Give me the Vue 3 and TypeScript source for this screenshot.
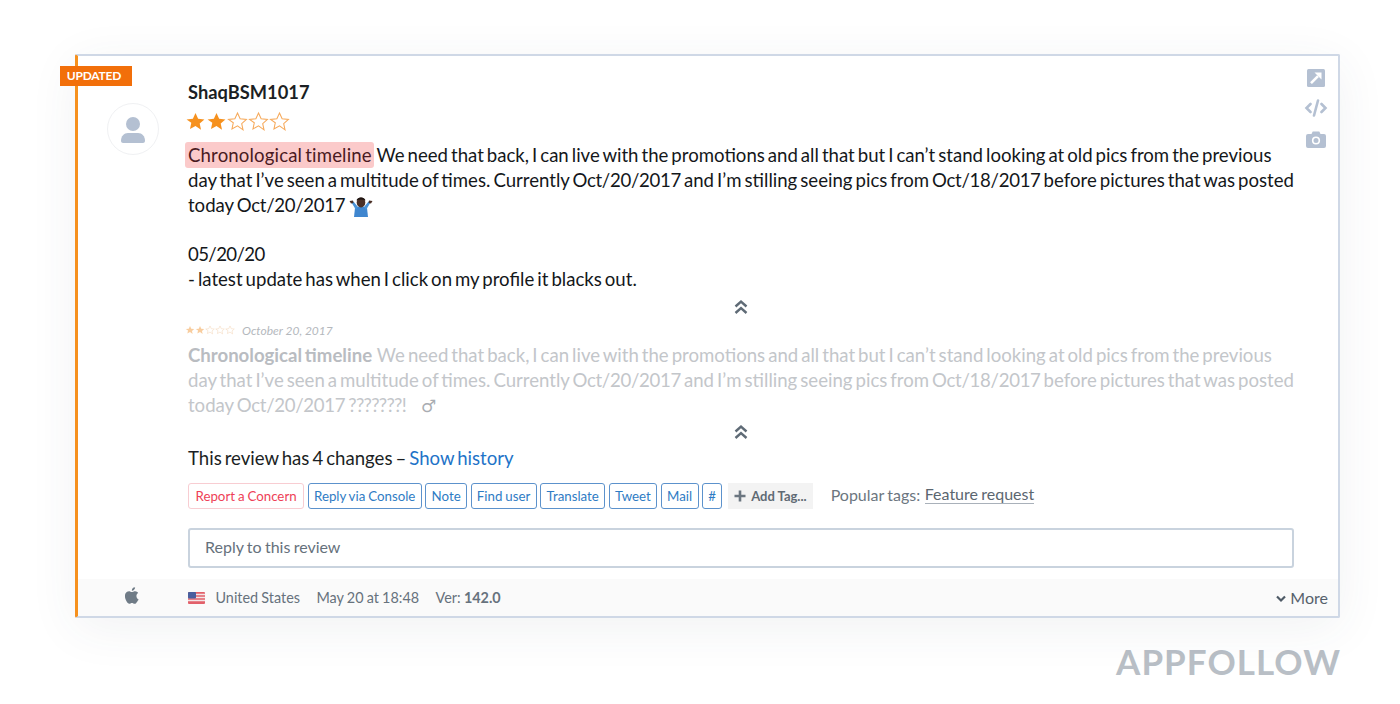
<script setup lang="ts">
const buttons = ["Reply via Console", "Note", "Find user", "Translate", "Tweet", "Mail", "#"];
const stars = [true, true, false, false, false];
const starPath = "M12 2.2l3 6.6 7.2.8-5.4 4.8 1.5 7.1L12 17l-6.3 3.5 1.5-7.1L1.8 9.600l7.2-.8z";
</script>

<template>
  <div class="page">
    <div class="card">
      <div class="badge">UPDATED</div>
      <div class="side-icons">
        <svg width="18" height="18" viewBox="0 0 18 18">
          <rect width="18" height="18" rx="1.500" fill="#b4c0d2" />
          <path d="M4 14.200L11 7.200" stroke="#fff" stroke-width="2.600" fill="none" />
          <path d="M7.500 3.500H14.500V10.500z" fill="#fff" />
        </svg>
        <svg width="24" height="18" viewBox="0 0 24 18">
          <path d="M6.500 5L2.500 9l4 4M17.500 5L21.500 9l-4 4M14 1.500L10 16.500" stroke="#b4c0d2" stroke-width="2.600" fill="none" stroke-linecap="round" />
        </svg>
        <svg class="camera" width="20" height="17" viewBox="0 0 20 17">
          <path d="M2 3h3.500l1.200-2.500h6.600L14.500 3H18a2 2 0 0 1 2 2v10a2 2 0 0 1-2 2H2a2 2 0 0 1-2-2V5a2 2 0 0 1 2-2z" fill="#b4c0d2" />
          <circle cx="10" cy="9.500" r="3.300" fill="none" stroke="#fff" stroke-width="1.600" />
        </svg>
      </div>

      <div class="body">
        <div class="avatar-col">
          <div class="avatar">
            <svg width="26" height="27" viewBox="0 0 26 27">
              <circle cx="13" cy="8" r="7" fill="#b4c0d2" />
              <path d="M1 25c0-5 3-8 7-8h10c4 0 7 3 7 8 0 1-1 2-2 2H3c-1 0-2-1-2-2z" fill="#b4c0d2" />
            </svg>
          </div>
        </div>

        <div class="main">
          <div class="name">ShaqBSM1017</div>
          <div class="stars">
            <svg v-for="(on, i) in stars" :key="i" width="21" height="21" viewBox="0 0 24 24">
              <path :d="starPath" :fill="on ? '#f6911e' : 'none'" stroke="#f6a95a" :stroke-width="on ? 0 : 1.200" />
            </svg>
          </div>

          <p class="text first">
            <span class="hl">Chronological timeline</span>
            <span> We need that back, I can live with the promotions and all that but I can’t stand looking at old pics from the previous</span><br />
            <span>day that I’ve seen a multitude of times. Currently <i class="dt">Oct/20/2017</i> and I’m stilling seeing pics from <i class="dt">Oct/18/2017</i> before pictures that was posted</span><br />
            <span>today <i class="dt">Oct/20/2017</i></span>
            <svg class="shrug" width="24" height="22" viewBox="0 0 24 22">
              <path d="M6 13c2-2 10-2 12 0l1 9H5z" fill="#3f86cf" />
              <path d="M7 15L2.500 7.500 4.500 6.500 9 12zM17 15l4.500-7.500-2-1L15 12z" fill="#4a93d8" />
              <path d="M0.500 6l3.500-.5.500 2.500-2.500.5zM23.500 6l-3.500-.5-.5 2.500 2.500.5z" fill="#4b3027" />
              <ellipse cx="12" cy="7.500" rx="4.300" ry="5" fill="#4b3027" />
              <path d="M7.500 5.500C8 1.500 16 1.500 16.500 5.500 14 4 10 4 7.500 5.500z" fill="#1f1512" />
            </svg>
          </p>
          <p class="text gap-line"><i class="dt short">05/20/20</i><br />- latest update has when I click on my profile it blacks out.</p>

          <div class="chevrons">
            <svg width="14" height="16" viewBox="0 0 14 16">
              <path d="M1.500 7.500L7 2.500l5.500 5M1.500 14L7 9l5.500 5" fill="none" stroke="#5f6b76" stroke-width="2.400" />
            </svg>
          </div>

          <div class="old-meta">
            <div class="mini-stars">
              <svg v-for="(on, i) in stars" :key="i" width="10" height="10" viewBox="0 0 24 24">
                <path :d="starPath" :fill="on ? '#f8cd9f' : 'none'" stroke="#f5dcc2" :stroke-width="on ? 0 : 1.500" />
              </svg>
            </div>
            <span class="old-date">October 20, 2017</span>
          </div>
          <p class="text old">
            <b>Chronological timeline</b>
            <span> We need that back, I can live with the promotions and all that but I can’t stand looking at old pics from the previous</span><br />
            <span>day that I’ve seen a multitude of times. Currently <i class="dt">Oct/20/2017</i> and I’m stilling seeing pics from <i class="dt">Oct/18/2017</i> before pictures that was posted</span><br />
            <span>today <i class="dt">Oct/20/2017</i> <i class="marks">???????!</i></span>
            <span class="male">♂</span>
          </p>

          <div class="chevrons second">
            <svg width="14" height="16" viewBox="0 0 14 16">
              <path d="M1.500 7.500L7 2.500l5.500 5M1.500 14L7 9l5.500 5" fill="none" stroke="#5f6b76" stroke-width="2.400" />
            </svg>
          </div>

          <p class="changes">This review has 4 changes – <a class="link">Show history</a></p>

          <div class="actions">
            <span class="btn red">Report a Concern</span>
            <span v-for="b in buttons" :key="b" class="btn">{{ b }}</span>
            <span class="add-tag">
              <svg width="12" height="12" viewBox="0 0 12 12"><path d="M6 0.500v11M0.500 6h11" stroke="#6b7680" stroke-width="2.600" /></svg>
              Add Tag...
            </span>
            <span class="popular">Popular tags:</span>
            <span class="tag">Feature request</span>
          </div>

          <div class="reply">Reply to this review</div>
        </div>
      </div>

      <div class="footer">
        <div class="os">
          <svg width="15" height="17" viewBox="0 0 170 200">
            <path fill="#6f7b86" d="M150 155c-3 7-6 13-10 19-5 8-10 13-13 16-5 5-11 7-17 7-4 0-9-1-15-4-6-2-11-4-16-4s-11 1-17 4c-6 3-11 4-15 4-6 0-12-2-17-8-4-3-9-9-14-17-6-9-10-19-14-30-4-12-6-24-6-35 0-13 3-24 8-33 4-7 10-13 17-17s14-6 23-6c4 0 10 1 18 4s13 5 15 5c2 0 8-2 17-5 8-3 16-4 22-4 16 1 28 8 36 20-14 9-21 21-21 36 0 12 4 22 13 30 4 4 8 7 13 9-1 3-2 6-4 9zM116 4c0 9-3 18-10 26-8 10-18 16-29 15 0-1 0-2 0-4 0-9 4-18 10-25 3-4 7-7 12-9 5-3 10-4 15-5 1 1 2 2 2 2z" />
          </svg>
        </div>
        <div class="meta">
          <svg class="flag" width="17" height="12" viewBox="0 0 17 12">
            <rect width="17" height="12" rx="1" fill="#e2606a" />
            <path d="M0 2.500h17M0 5.500h17M0 8.500h17" stroke="#f3e6e8" stroke-width="1.300" />
            <rect width="8" height="6.500" rx="1" fill="#4a5f9e" />
          </svg>
          <span class="country">United States</span>
          <span>May 20 at 18:48</span>
          <span>Ver: <b>142.0</b></span>
        </div>
        <div class="more">
          <svg width="10" height="8" viewBox="0 0 10 8"><path d="M1 1.500L5 5.500l4-4" fill="none" stroke="#4e5a66" stroke-width="2.200" /></svg>
          More
        </div>
      </div>
    </div>
    <div class="brand">APPFOLLOW</div>
  </div>
</template>

<style>
html, body {
  margin: 0;
  background: #fff;
}
</style>

<style scoped>
.page {
  width: 1400px;
  height: 704px;
  box-sizing: border-box;
  padding: 54px 60px 0 75px;
  font-family: Lato, "Liberation Sans", sans-serif;
  color: #1b1f24;
  overflow: hidden;
}

.card {
  position: relative;
  height: 564px;
  box-sizing: border-box;
  background: #fff;
  border: 2px solid #cfd8e6;
  border-left: 3px solid #f6911e;
  border-radius: 2px;
  box-shadow: 0 10px 50px rgba(60, 70, 90, 0.07);
  display: flex;
  flex-direction: column;
}

.badge {
  position: absolute;
  left: -18px;
  top: 10px;
  width: 72px;
  height: 20px;
  box-sizing: border-box;
  padding-right: 4px;
  background: #f26f0a;
  color: #fff;
  font-size: 12px;
  font-weight: 700;
  letter-spacing: -0.2px;
  line-height: 20px;
  text-align: center;
}

.side-icons {
  position: absolute;
  right: 9px;
  top: 13px;
  width: 26px;
  display: flex;
  flex-direction: column;
  align-items: center;
  gap: 12px;
}

.camera {
  margin-top: 2px;
}

.body {
  flex: 1;
  display: flex;
}

.avatar-col {
  width: 110px;
  flex-shrink: 0;
  padding: 47px 0 0 29px;
  box-sizing: border-box;
}

.avatar {
  width: 52px;
  height: 52px;
  box-sizing: border-box;
  border: 1px solid #f0f1f3;
  border-radius: 50%;
  display: flex;
  align-items: center;
  justify-content: center;
}

.main {
  width: 1108px;
  padding-top: 24px;
}

.name {
  font-size: 18.300px;
  font-weight: 700;
  line-height: 24px;
}

.stars {
  display: flex;
  height: 21px;
  margin: 7px 0 0 -3px;
}

.text {
  margin: 7px 0 0;
  font-size: 18.600px;
  word-spacing: -1.750px;
  line-height: 25px;
  color: #14171a;
  white-space: nowrap;
}

.first {
  margin-top: 11px;
}

.hl {
  background: #fbcaca;
  border-radius: 3px;
  padding: 2px 2px 2px 3px;
  margin-left: -3px;
  color: #4a1a22;
  letter-spacing: 0.150px;
}

.dt {
  font-style: normal;
  letter-spacing: -0.300px;
}

.short {
  letter-spacing: -0.600px;
}

.marks {
  font-style: normal;
  letter-spacing: -0.700px;
}

.shrug {
  vertical-align: -5px;
  margin-left: 4px;
}

.gap-line {
  margin-top: 24px;
}

.chevrons {
  display: flex;
  justify-content: center;
  height: 16px;
  margin-top: 7px;
  padding-right: 3px;
}

.second {
  margin-top: 5px;
}

.old-meta {
  display: flex;
  align-items: center;
  gap: 7px;
  height: 16px;
  margin-top: 7px;
  margin-left: -3px;
}

.mini-stars {
  display: flex;
}

.old-date {
  font-size: 12px;
  font-style: italic;
  color: #b4b8bd;
}

.old {
  color: #c3c6ca;
  margin-top: 5px;
}

.old b {
  color: #b9bcc1;
  margin-right: 2px;
}

.male {
  margin-left: 15px;
  font-family: "DejaVu Sans", sans-serif;
  font-size: 17px;
  color: #a9adb2;
}

.changes {
  margin: 5px 0 0;
  font-size: 18.600px;
  word-spacing: -1.750px;
  line-height: 26px;
}

.link {
  color: #1e73c8;
}

.actions {
  display: flex;
  align-items: center;
  gap: 3.500px;
  margin-top: 12px;
  height: 26px;
}

.btn {
  height: 26px;
  box-sizing: border-box;
  padding: 0 5.350px;
  border: 1px solid #5c92cc;
  border-radius: 3px;
  color: #2f7cc4;
  font-size: 13.300px;
  word-spacing: -0.500px;
  line-height: 24px;
  white-space: nowrap;
}

.red {
  padding: 0 6.500px;
  border-color: #f8cdd2;
  color: #ee3f57;
}

.add-tag {
  height: 26px;
  padding: 0 6.500px;
  margin-left: 2px;
  background: #f3f3f3;
  color: #5f6a74;
  font-size: 13px;
  font-weight: 700;
  line-height: 26px;
  white-space: nowrap;
}

.add-tag svg {
  vertical-align: -1px;
  margin-right: 2px;
}

.popular {
  margin-left: 14px;
  margin-right: 1px;
  margin-bottom: 3px;
  color: #6c7680;
  font-size: 16px;
  word-spacing: -0.800px;
}

.tag {
  margin-bottom: 3px;
  color: #5b6670;
  font-size: 16px;
  word-spacing: -0.800px;
  border-bottom: 1px solid #a9b1ba;
  line-height: 18px;
}

.reply {
  margin-top: 19px;
  width: 1106px;
  height: 40px;
  box-sizing: border-box;
  border: 2px solid #c9d3de;
  border-radius: 3px;
  padding-left: 15px;
  color: #66717c;
  font-size: 16px;
  word-spacing: -0.800px;
  line-height: 34px;
}

.footer {
  height: 37px;
  background: #fafafa;
  display: flex;
  align-items: center;
  color: #67727d;
  font-size: 14.400px;
}

.os {
  width: 110px;
  flex-shrink: 0;
  box-sizing: border-box;
  padding: 0 0 5px 47px;
  display: flex;
}

.meta {
  flex: 1;
  display: flex;
  align-items: center;
  gap: 16.500px;
  word-spacing: -0.500px;
}

.flag {
  margin-right: -6px;
}

.meta b {
  font-weight: 700;
}

.more {
  padding-right: 10px;
  color: #56616c;
  font-size: 16px;
}

.more svg {
  vertical-align: 1px;
}

.brand {
  margin-top: 21px;
  margin-right: -1px;
  text-align: right;
  color: #b9bfc6;
  font-size: 35px;
  font-weight: 700;
  letter-spacing: 1.050px;
  line-height: 44px;
}
</style>
